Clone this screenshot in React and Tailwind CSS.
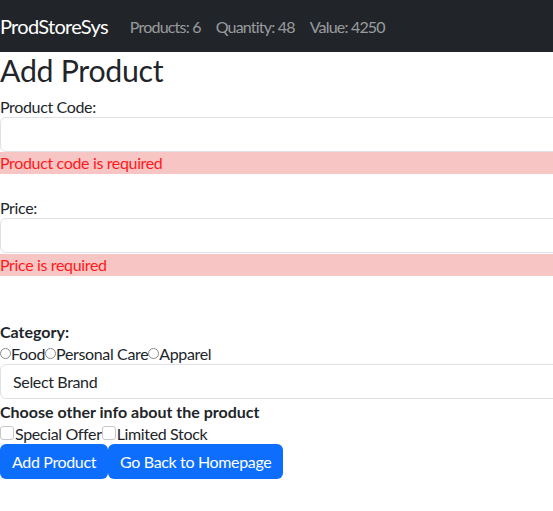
import React from "react";

function Radio({ label }) {
  return (
    <span className="inline-flex items-center">
      <span className="inline-block w-[11px] h-[11px] rounded-full border border-[#8a8a92] bg-white" />
      <span>{label}</span>
    </span>
  );
}

function Check({ label }) {
  return (
    <span className="inline-flex items-center">
      <span className="inline-block w-[14px] h-[14px] rounded-[3px] border border-[#c4c7cb] bg-white" />
      <span className="ml-px">{label}</span>
    </span>
  );
}

export default function App() {
  return (
    <div
      className="w-[553px] h-[511px] overflow-hidden bg-white text-[#212529] text-[16px] leading-[21px] tracking-[-0.35px]"
      style={{ fontFamily: "Lato, 'Noto Sans', sans-serif" }}
    >
      <nav className="h-[52px] bg-[#212529] flex items-center">
        <span className="text-white text-[20px] leading-[30px] tracking-[-0.7px]">ProdStoreSys</span>
        <div className="flex items-center ml-[22px] gap-[15px] text-[rgba(255,255,255,0.55)] tracking-[-0.8px]">
          <span>Products: 6</span>
          <span>Quantity: 48</span>
          <span>Value: 4250</span>
        </div>
      </nav>

      <h1 className="text-[30.3px] leading-[36px] font-normal h-[36px] mb-[8px] tracking-[-0.3px]">Add Product</h1>

      <div className="w-[700px]">
        <label className="block h-[21px]">Product Code:</label>
        <div className="h-[35px] border border-[#dee2e6] rounded-[6px] bg-white" />
        <div className="h-[21.5px] bg-[#f8c5c5] text-[#ff1a1a]">Product code is required</div>

        <label className="block h-[21px] mt-[23.5px]">Price:</label>
        <div className="h-[35px] border border-[#dee2e6] rounded-[6px] bg-white" />
        <div className="h-[21.5px] bg-[#f8c5c5] text-[#ff1a1a] mt-[1px]">Price is required</div>

        <div className="font-bold tracking-normal h-[21px] mt-[45.5px]">Category:</div>
        <div className="h-[22px] flex items-center">
          <Radio label="Food" />
          <Radio label="Personal Care" />
          <Radio label="Apparel" />
        </div>
        <div className="h-[35px] border border-[#dee2e6] rounded-[6px] bg-white flex items-center pl-[12px]">
          Select Brand
        </div>
        <div className="font-bold tracking-normal h-[21px] mt-[2px]">Choose other info about the product</div>
        <div className="h-[22px] flex items-center">
          <Check label="Special Offer" />
          <Check label="Limited Stock" />
        </div>
        <div className="flex">
          <button className="h-[35px] px-[12px] bg-[#0d6efd] text-white rounded-[6px]">Add Product</button>
          <button className="h-[35px] px-[12px] bg-[#0d6efd] text-white rounded-[6px]">Go Back to Homepage</button>
        </div>
      </div>
    </div>
  );
}
